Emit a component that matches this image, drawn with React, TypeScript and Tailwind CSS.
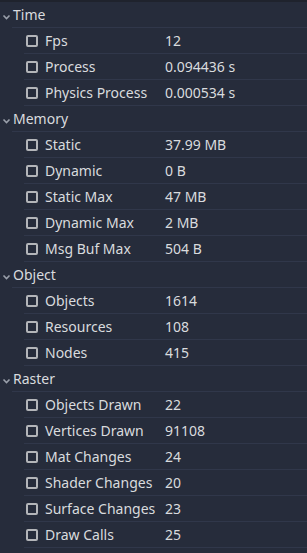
const sections: { title: string; items: [string, string][] }[] = [
  {
    title: "Time",
    items: [
      ["Fps", "12"],
      ["Process", "0.094436 s"],
      ["Physics Process", "0.000534 s"],
    ],
  },
  {
    title: "Memory",
    items: [
      ["Static", "37.99 MB"],
      ["Dynamic", "0 B"],
      ["Static Max", "47 MB"],
      ["Dynamic Max", "2 MB"],
      ["Msg Buf Max", "504 B"],
    ],
  },
  {
    title: "Object",
    items: [
      ["Objects", "1614"],
      ["Resources", "108"],
      ["Nodes", "415"],
    ],
  },
  {
    title: "Raster",
    items: [
      ["Objects Drawn", "22"],
      ["Vertices Drawn", "91108"],
      ["Mat Changes", "24"],
      ["Shader Changes", "20"],
      ["Surface Changes", "23"],
      ["Draw Calls", "25"],
    ],
  },
]

function Chevron() {
  return (
    <svg width="12" height="26" viewBox="0 0 12 26" className="shrink-0">
      <path d="M3.5 13.5 L6.5 16.5 L9.5 13.5" stroke="#9aa0ab" strokeWidth="1.6" fill="none" />
    </svg>
  )
}

export default function App() {
  return (
    <div
      className="w-[307px] h-[553px] bg-[#262c3b] border-t-2 border-[#1f232d] text-[14px] text-[#d9dbde] overflow-hidden"
      style={{ fontFamily: '"Noto Sans", sans-serif' }}
    >
      {sections.map((s) => (
        <div key={s.title}>
          <div className="flex h-[26px]">
            <Chevron />
            <div className="flex-1 flex items-center border-b border-[#30374a] pl-[1px] pb-[1px]">{s.title}</div>
          </div>
          {s.items.map(([label, value]) => (
            <div key={label} className="flex h-[26px] pl-[24px]">
              <div className="flex-1 flex items-center border-b border-[#30374a]">
                <span className="ml-[2px] w-[12px] h-[12px] rounded-[2px] border-2 border-[#b3b5b9] shrink-0" />
                <span className="ml-[7px] w-[120px] whitespace-nowrap">{label}</span>
                <span className="whitespace-nowrap">{value}</span>
              </div>
            </div>
          ))}
        </div>
      ))}
    </div>
  )
}
